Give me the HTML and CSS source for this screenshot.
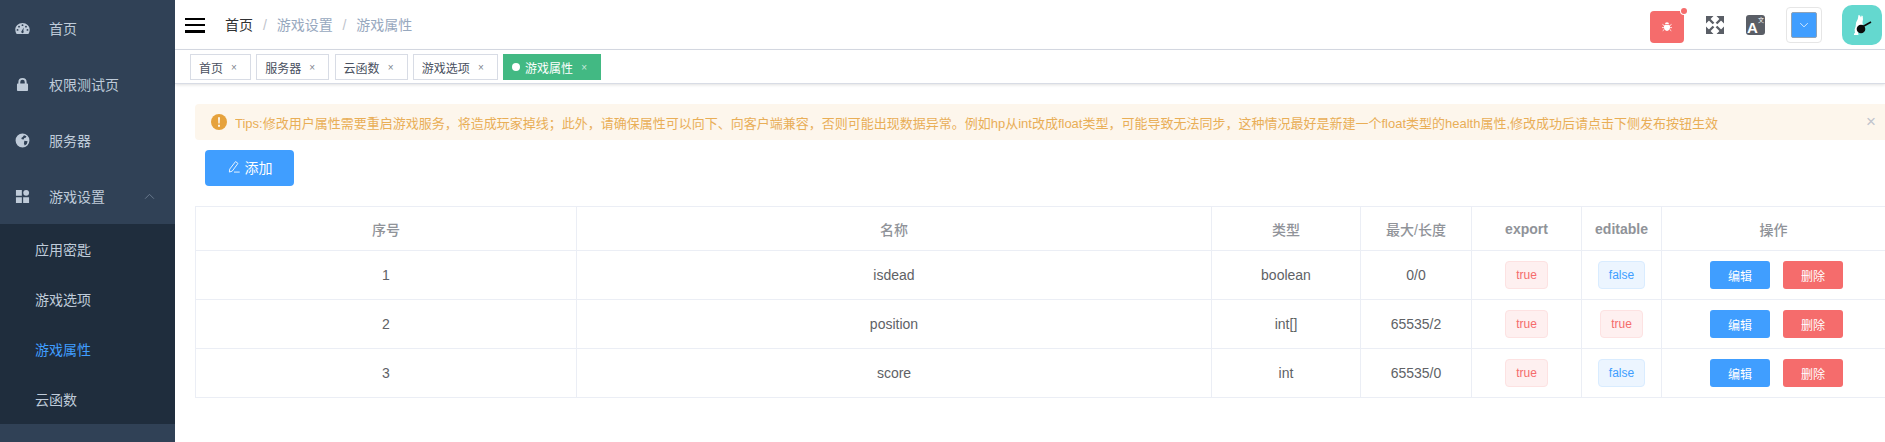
FILE: index.html
```html
<!DOCTYPE html>
<html lang="zh-CN">
<head>
  <meta charset="UTF-8">
  <title>游戏属性</title>
  <link rel="stylesheet" href="styles.css">
</head>
<body>
  <aside class="sidebar">
    <a class="menu-item">
      <svg class="menu-icon" viewBox="0 0 16 16"><path fill-rule="evenodd" d="M8 2.200C3.700 2.200.3 5.400.3 9.400c0 1.600.5 3 1.400 4.400h12.600c.9-1.400 1.400-2.800 1.400-4.400 0-4-3.400-7.200-7.700-7.200zM8 3.400a1 1 0 1 1 0 2 1 1 0 0 1 0-2zM4.300 5a1 1 0 1 1 0 2 1 1 0 0 1 0-2zm7.400 0a1 1 0 1 1 0 2 1 1 0 0 1 0-2zM2.700 8.500a1 1 0 1 1 0 2 1 1 0 0 1 0-2zm10.600 0a1 1 0 1 1 0 2 1 1 0 0 1 0-2zM9.300 7 8.900 10.700a1.300 1.300 0 1 1-1.800 0z"/></svg>
      <span>首页</span>
    </a>
    <a class="menu-item">
      <svg class="menu-icon" viewBox="0 0 16 16"><path fill-rule="evenodd" d="M3.600 7V5.400a4.400 4.400 0 0 1 8.800 0V7h.6c.5 0 .9.400.9.900v6.200c0 .5-.4.900-.9.900H3c-.5 0-.9-.4-.9-.9V7.900c0-.5.400-.9.900-.9zm2 0h4.800V5.400a2.400 2.400 0 0 0-4.800 0z"/></svg>
      <span>权限测试页</span>
    </a>
    <a class="menu-item">
      <svg class="menu-icon" viewBox="0 0 16 16"><path fill-rule="evenodd" d="M8 .6a7.400 7.400 0 1 0 0 14.800A7.400 7.400 0 0 0 8 .6zM9.600 2.400l2.600 1-.8 1.700-1.500.2-.7 1.500-2-.2-.5-1.300 1.500-1zM10 8.200l3.400.6-.8 3-2.200 1.500-.9-2.200z"/></svg>
      <span>服务器</span>
    </a>
    <a class="menu-item">
      <svg class="menu-icon" viewBox="0 0 16 16"><path d="M1 1h6.300v6.300H1zM1 8.700h6.300V15H1zM8.700 8.700H15V15H8.700z"/><circle cx="11.900" cy="4.100" r="3.100"/></svg>
      <span>游戏设置</span>
      <svg class="menu-arrow" viewBox="0 0 12 8"><path d="M1 6.500 6 1.500l5 5"/></svg>
    </a>
    <div class="submenu">
      <a class="submenu-item">应用密匙</a>
      <a class="submenu-item">游戏选项</a>
      <a class="submenu-item active">游戏属性</a>
      <a class="submenu-item">云函数</a>
    </div>
  </aside>

  <div class="main">
    <header class="navbar">
      <div class="hamburger"><i></i><i></i><i></i></div>
      <nav class="breadcrumb">
        <span class="crumb-home">首页</span>
        <span class="crumb-sep">/</span>
        <span>游戏设置</span>
        <span class="crumb-sep">/</span>
        <span>游戏属性</span>
      </nav>
      <div class="nav-right">
        <div class="bug-btn">
          <svg viewBox="0 0 16 16"><path d="M5.300 4.200a2.700 2.700 0 0 1 5.400 0zM4.600 5.200h6.800c.5.800.7 1.700.7 2.800 0 2.900-1.500 5.200-4.100 5.200S3.900 10.900 3.900 8c0-1.100.2-2 .7-2.800z"/><path class="bug-legs" d="M4 6 2 4.500M12 6l2-1.500M3.800 8.800H1.500M12.200 8.800h2.300M4.300 11.300 2.300 13M11.700 11.300l2 1.700"/></svg>
          <b class="bug-dot"></b>
        </div>
        <svg class="fullscreen" viewBox="0 0 18 18"><path d="M0 0h7.500L0 7.500zM18 0v7.500L10.500 0zM0 18v-7.500L7.500 18zM18 18h-7.500l7.500-7.500z"/><path class="fs-line" d="m3 3 4.500 4.500M15 3l-4.500 4.500M3 15l4.500-4.500M15 15l-4.500-4.500"/></svg>
        <div class="lang-btn"><span class="lang-a">A</span><span class="lang-small">文</span></div>
        <div class="color-picker">
          <div class="color-swatch">
            <svg viewBox="0 0 12 8"><path d="M1 1.500 6 6.500l5-5"/></svg>
          </div>
        </div>
        <div class="avatar">
          <svg viewBox="0 0 40 40">
            <path fill="#fff" d="M16.500 10l1.500.6 1 1.900.6-2 1.100.4.300 3.300-.5 3c.3 1 .3 2.200 0 3.300l-3.800 3.500-.6 3.500.4 2.500H12c-.2-.8.2-1.500 1-2.200l-.4-3.300 1-3 .5-4 1.700-3.500z"/>
            <circle cx="19" cy="24" r="4.300" fill="#0a0a0a"/>
            <path stroke="#0a0a0a" stroke-width="1.500" fill="none" d="M21 21.500 29 17"/>
          </svg>
        </div>
      </div>
    </header>

    <div class="tags-bar">
      <a class="tag-tab">首页<span class="tag-close">×</span></a>
      <a class="tag-tab">服务器<span class="tag-close">×</span></a>
      <a class="tag-tab">云函数<span class="tag-close">×</span></a>
      <a class="tag-tab">游戏选项<span class="tag-close">×</span></a>
      <a class="tag-tab active"><i class="tag-dot"></i>游戏属性<span class="tag-close">×</span></a>
    </div>

    <section class="content">
      <div class="alert">
        <svg class="alert-icon" viewBox="0 0 16 16"><circle cx="8" cy="8" r="8"/><path class="alert-mark" d="M7 3.300h2l-.3 6.200H7.300zM7 10.700h2v2H7z"/></svg>
        <span class="alert-text">Tips:修改用户属性需要重启游戏服务，将造成玩家掉线；此外，请确保属性可以向下、向客户端兼容，否则可能出现数据异常。例如hp从int改成float类型，可能导致无法同步，这种情况最好是新建一个float类型的health属性,修改成功后请点击下侧发布按钮生效</span>
        <span class="alert-close">×</span>
      </div>

      <button class="add-btn">
        <svg viewBox="0 0 16 16"><path d="M9.800 1.800 12.500 3.900 6 12.700l-3.300 1.100.4-3.400zM8 13.800h6.500"/></svg>
        添加
      </button>

      <table class="data-table">
        <thead>
          <tr>
            <th class="col-index">序号</th>
            <th class="col-name">名称</th>
            <th class="col-type">类型</th>
            <th class="col-max">最大/长度</th>
            <th class="col-flag latin">export</th>
            <th class="col-flag latin">editable</th>
            <th>操作</th>
          </tr>
        </thead>
        <tbody>
          <tr>
            <td>1</td>
            <td>isdead</td>
            <td>boolean</td>
            <td>0/0</td>
            <td><span class="tag tag-true">true</span></td>
            <td><span class="tag tag-false">false</span></td>
            <td><div class="ops"><button class="btn btn-blue">编辑</button><button class="btn btn-red">删除</button></div></td>
          </tr>
          <tr>
            <td>2</td>
            <td>position</td>
            <td>int[]</td>
            <td>65535/2</td>
            <td><span class="tag tag-true">true</span></td>
            <td><span class="tag tag-true">true</span></td>
            <td><div class="ops"><button class="btn btn-blue">编辑</button><button class="btn btn-red">删除</button></div></td>
          </tr>
          <tr>
            <td>3</td>
            <td>score</td>
            <td>int</td>
            <td>65535/0</td>
            <td><span class="tag tag-true">true</span></td>
            <td><span class="tag tag-false">false</span></td>
            <td><div class="ops"><button class="btn btn-blue">编辑</button><button class="btn btn-red">删除</button></div></td>
          </tr>
        </tbody>
      </table>
    </section>
  </div>
</body>
</html>
```

FILE: styles.css
```css
* {
  box-sizing: border-box;
}

body {
  margin: 0;
  height: 442px;
  display: flex;
  overflow: hidden;
  background: #fff;
  font-family: "Liberation Sans", "Noto Sans CJK SC", sans-serif;
  font-size: 14px;
  color: #606266;
}

/* sidebar */
.sidebar {
  width: 175px;
  flex-shrink: 0;
  background: #304156;
  color: #bfcbd9;
}

.menu-item {
  height: 56px;
  display: flex;
  align-items: center;
  padding-left: 15px;
  position: relative;
}

.menu-icon {
  width: 15px;
  height: 15px;
  margin-right: 19px;
  fill: #bfcbd9;
}

.menu-arrow {
  width: 11px;
  height: 7px;
  position: absolute;
  left: 144px;
  top: 25px;
  fill: none;
  stroke: #6f7f92;
  stroke-width: 1;
}

.submenu {
  background: #1f2d3d;
}

.submenu-item {
  display: block;
  height: 50px;
  line-height: 52px;
  padding-left: 35px;
}

.submenu-item.active {
  color: #409eff;
}

/* top bar */
.main {
  flex: 1;
  min-width: 0;
  display: flex;
  flex-direction: column;
}

.navbar {
  height: 50px;
  flex-shrink: 0;
  display: flex;
  align-items: center;
  padding: 0 3px 0 10px;
  border-bottom: 1px solid #d8dce5;
}

.hamburger {
  width: 20px;
  height: 15px;
  display: flex;
  flex-direction: column;
  justify-content: space-between;
  margin-top: 1px;
}

.hamburger i {
  display: block;
  height: 2.500px;
  background: #000;
}

.breadcrumb {
  margin-left: 20px;
  margin-top: -1px;
  color: #97a8be;
}

.crumb-home {
  color: #303133;
}

.crumb-sep {
  margin: 0 6px;
  color: #c0c4cc;
}

.nav-right {
  margin-left: auto;
  display: flex;
  align-items: center;
}

.bug-btn {
  width: 34px;
  height: 32px;
  margin-top: 5px;
  border-radius: 4px;
  background: #f56c6c;
  display: flex;
  align-items: center;
  justify-content: center;
  position: relative;
}

.bug-btn svg {
  width: 12px;
  height: 12px;
  fill: #fff;
}

.bug-legs {
  fill: none;
  stroke: #fff;
  stroke-width: 1.200;
}

.bug-dot {
  position: absolute;
  top: -3px;
  right: -3px;
  width: 6px;
  height: 6px;
  border-radius: 50%;
  background: #f56c6c;
  box-shadow: 0 0 0 1px #fff;
}

.fullscreen {
  width: 18px;
  height: 18px;
  margin-left: 22px;
  fill: #5a5e66;
}

.fs-line {
  fill: none;
  stroke: #5a5e66;
  stroke-width: 2.400;
}

.lang-btn {
  width: 19px;
  height: 20px;
  margin-left: 22px;
  border-radius: 3px;
  background: #5a5e66;
  color: #fff;
  position: relative;
  overflow: hidden;
}

.lang-a {
  position: absolute;
  left: 1px;
  bottom: 0;
  font-size: 15px;
  line-height: 15px;
  font-weight: bold;
}

.lang-small {
  position: absolute;
  right: 1px;
  top: 1px;
  font-size: 6px;
  line-height: 8px;
}

.color-picker {
  width: 36px;
  height: 36px;
  margin-left: 21px;
  padding: 4px;
  border: 1px solid #e6e6e6;
  border-radius: 4px;
  background: #fff;
}

.color-swatch {
  height: 100%;
  border: 1px solid #8fa3b8;
  border-radius: 2px;
  background: #409eff;
  display: flex;
  align-items: center;
  justify-content: center;
}

.color-swatch svg {
  width: 10px;
  height: 6px;
  fill: none;
  stroke: #fff;
  stroke-width: 1;
}

.avatar {
  width: 40px;
  height: 40px;
  margin-left: 20px;
  border-radius: 10px;
  background: #64d8cf;
}

.avatar svg {
  display: block;
  width: 40px;
  height: 40px;
}

/* open page tabs */
.tags-bar {
  height: 34px;
  flex-shrink: 0;
  display: flex;
  gap: 5.250px;
  padding: 4px 0 0 15px;
  background: #fff;
  border-bottom: 1px solid #d8dce5;
  box-shadow: 0 1px 3px rgba(0, 0, 0, 0.12);
}

.tag-tab {
  height: 26px;
  display: flex;
  align-items: center;
  padding: 0 8px;
  border: 1px solid #d8dce5;
  background: #fff;
  color: #495060;
  font-size: 12px;
}

.tag-tab.active {
  background: #42b983;
  border-color: #42b983;
  color: #fff;
}

.tag-dot {
  width: 8px;
  height: 8px;
  margin-right: 5px;
  border-radius: 50%;
  background: #fff;
}

.tag-close {
  width: 16px;
  margin-left: 3px;
  text-align: center;
  font-size: 10px;
  opacity: 0.7;
}

/* page content */
.content {
  padding: 20px 0 0 20px;
}

.alert {
  height: 36px;
  display: flex;
  align-items: center;
  padding: 0 9px 0 16px;
  border-radius: 4px 0 0 4px;
  background: #fdf6ec;
  color: #e6a23c;
  font-size: 13px;
}

.alert-icon {
  width: 16px;
  height: 16px;
  margin-right: 8px;
  fill: #e6a23c;
}

.alert-mark {
  fill: #fdf6ec;
}

.alert-text {
  flex: 1;
  opacity: 0.85;
}

.alert-close {
  color: #c0c4cc;
  font-size: 17px;
}

.add-btn {
  display: flex;
  align-items: center;
  justify-content: center;
  width: 89px;
  height: 36px;
  margin: 10px 0 0 10px;
  padding: 0 0 2px;
  border: 0;
  border-radius: 4px;
  background: #409eff;
  color: #fff;
  font: inherit;
}

.add-btn svg {
  width: 14px;
  height: 14px;
  margin-right: 4px;
  fill: none;
  stroke: #fff;
  stroke-width: 1;
}

.data-table {
  width: 1690px;
  margin-top: 20px;
  table-layout: fixed;
  border-collapse: collapse;
  border-top: 1px solid #ebeef5;
  border-left: 1px solid #ebeef5;
}

.data-table th,
.data-table td {
  padding: 0;
  text-align: center;
  border-right: 1px solid #ebeef5;
  border-bottom: 1px solid #ebeef5;
}

.data-table th {
  height: 44px;
  font-weight: 500;
  color: #909399;
}

.data-table th.latin {
  font-weight: bold;
}

.data-table td {
  height: 49px;
}

.data-table th:last-child,
.data-table td:last-child {
  border-right: 0;
}

.col-index {
  width: 381px;
}

.col-name {
  width: 635px;
}

.col-type {
  width: 149px;
}

.col-max {
  width: 111px;
}

.col-flag:nth-child(5) {
  width: 110px;
}

.col-flag:nth-child(6) {
  width: 80px;
}

.tag {
  display: inline-block;
  height: 28px;
  line-height: 26px;
  padding: 0 10px;
  border: 1px solid;
  border-radius: 4px;
  font-size: 12px;
  vertical-align: middle;
}

.tag-true {
  background: #fef0f0;
  border-color: #fde2e2;
  color: #f56c6c;
}

.tag-false {
  background: #ecf5ff;
  border-color: #d9ecff;
  color: #409eff;
}

.ops {
  display: flex;
  justify-content: center;
  gap: 13px;
  padding-left: 6px;
}

.btn {
  width: 60px;
  height: 28px;
  padding: 0;
  border: 0;
  border-radius: 3px;
  color: #fff;
  font: inherit;
  font-size: 12px;
}

.btn-blue {
  background: #409eff;
}

.btn-red {
  background: #f56c6c;
}
```
